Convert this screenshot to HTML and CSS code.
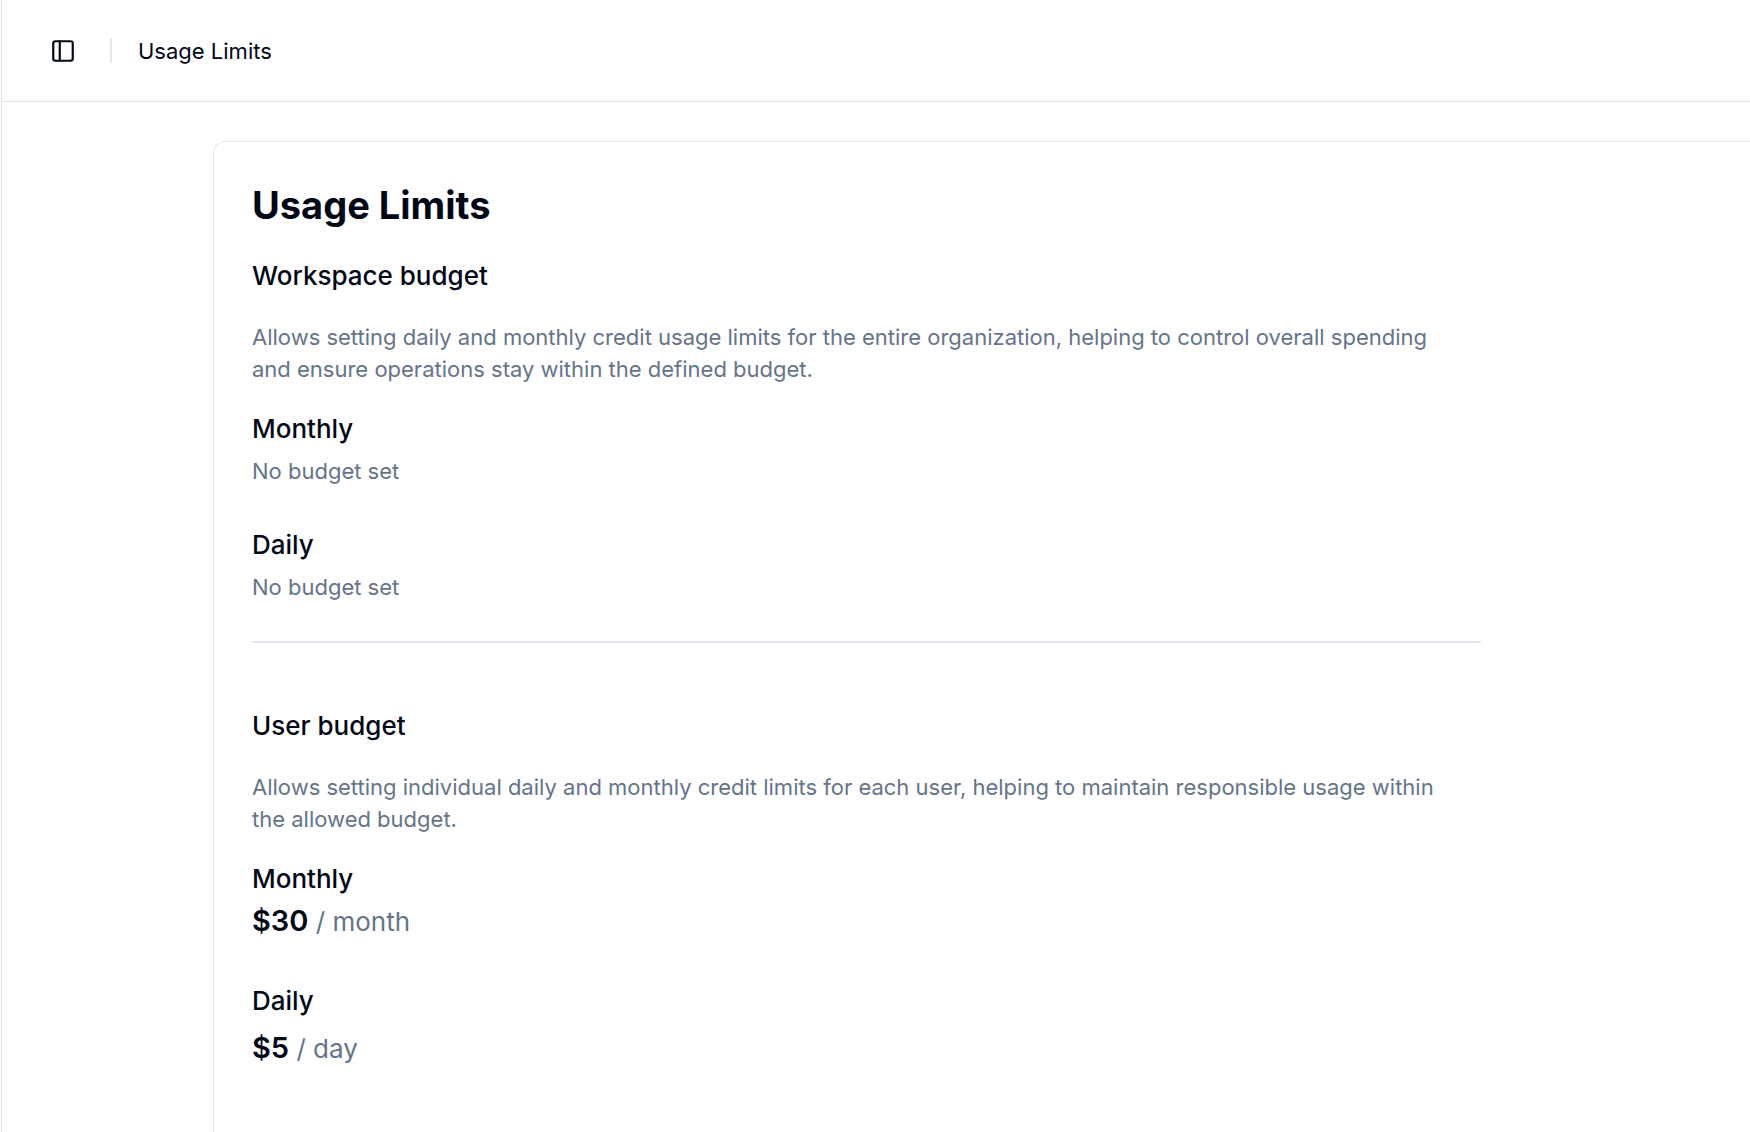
FILE: index.html
```html
<!DOCTYPE html>
<html lang="en">
<head>
<meta charset="utf-8">
<meta name="viewport" content="width=device-width, initial-scale=1">
<title>Usage Limits</title>
<link rel="stylesheet" href="styles.css">
</head>
<body>
<div class="shell">
  <header class="topbar">
    <button class="toggle" type="button" aria-label="Toggle sidebar">
      <svg width="26" height="26" viewBox="0 0 24 24" fill="none" stroke="currentColor" stroke-width="2" stroke-linecap="round" stroke-linejoin="round" aria-hidden="true">
        <rect x="3" y="3" width="18" height="18" rx="2"/>
        <path d="M9 3v18"/>
      </svg>
    </button>
    <span class="divider"></span>
    <nav class="crumb" aria-label="Breadcrumb">Usage Limits</nav>
  </header>
  <main class="content">
    <div class="card">
      <h1 class="title">Usage Limits</h1>
      <section class="budget">
        <h2 class="heading">Workspace budget</h2>
        <p class="text description">Allows setting daily and monthly credit usage limits for the entire organization, helping to control overall spending and ensure operations stay within the defined budget.</p>
        <div class="limits">
          <div class="limit">
            <h3 class="heading">Monthly</h3>
            <p class="text">No budget set</p>
          </div>
          <div class="limit">
            <h3 class="heading">Daily</h3>
            <p class="text">No budget set</p>
          </div>
        </div>
      </section>
      <hr class="rule">
      <section class="budget">
        <h2 class="heading">User budget</h2>
        <p class="text description">Allows setting individual daily and monthly credit limits for each user, helping to maintain responsible usage within the allowed budget.</p>
        <div class="limits">
          <div class="limit limit-tight">
            <h3 class="heading">Monthly</h3>
            <p class="price"><strong class="amount">$30</strong> / month</p>
          </div>
          <div class="limit">
            <h3 class="heading">Daily</h3>
            <p class="price"><strong class="amount">$5</strong> / day</p>
          </div>
        </div>
      </section>
    </div>
  </main>
</div>
</body>
</html>
```
FILE: styles.css
```css
* {
  box-sizing: border-box;
  margin: 0;
}

body {
  background: #fff;
  color: #020817;
  font-family: Inter, "Liberation Sans", sans-serif;
}

.shell {
  display: flex;
  flex-direction: column;
  min-height: 100vh;
  margin-left: 1px;
  border-left: 1px solid #e5e7eb;
}

.topbar {
  display: flex;
  align-items: center;
  height: 102px;
  padding-left: 44px;
  border-bottom: 1px solid #e2e4ea;
}

.toggle {
  display: flex;
  align-items: center;
  justify-content: center;
  width: 34px;
  height: 34px;
  padding: 0;
  border: 0;
  background: none;
  color: inherit;
}

.divider {
  width: 2px;
  height: 25px;
  margin: 0 26px 0 30px;
  background: #e2e8f0;
}

.crumb {
  font-size: 22px;
  line-height: 32px;
}

.content {
  display: flex;
  flex: 1;
  padding: 39px 0 0 211px;
}

.card {
  flex: 1;
  padding: 39px 38px 64px;
  border: 1px solid #e5e7eb;
  border-width: 1px 0 0 1px;
  border-top-left-radius: 12px;
}

.title {
  margin-bottom: 31px;
  font-size: 38px;
  font-weight: 700;
  line-height: 48px;
}

.budget,
.rule {
  max-width: 1229px;
}

.heading {
  font-size: 26px;
  font-weight: 500;
  line-height: 32px;
}

.text {
  color: #64748b;
  font-size: 22px;
  line-height: 32px;
}

.description {
  max-width: 1204px;
  margin: 29px 0 28px;
}

.limits {
  display: flex;
  flex-direction: column;
  gap: 42px;
}

.limit {
  display: flex;
  flex-direction: column;
  gap: 10px;
}

.limit-tight {
  gap: 5px;
}

.rule {
  height: 2px;
  margin: 38px 0 67px;
  border: 0;
  background: #e2e8f0;
}

.price {
  color: #64748b;
  font-size: 26px;
  line-height: 42px;
}

.amount {
  color: #020817;
  font-size: 29px;
  font-weight: 600;
}
```
